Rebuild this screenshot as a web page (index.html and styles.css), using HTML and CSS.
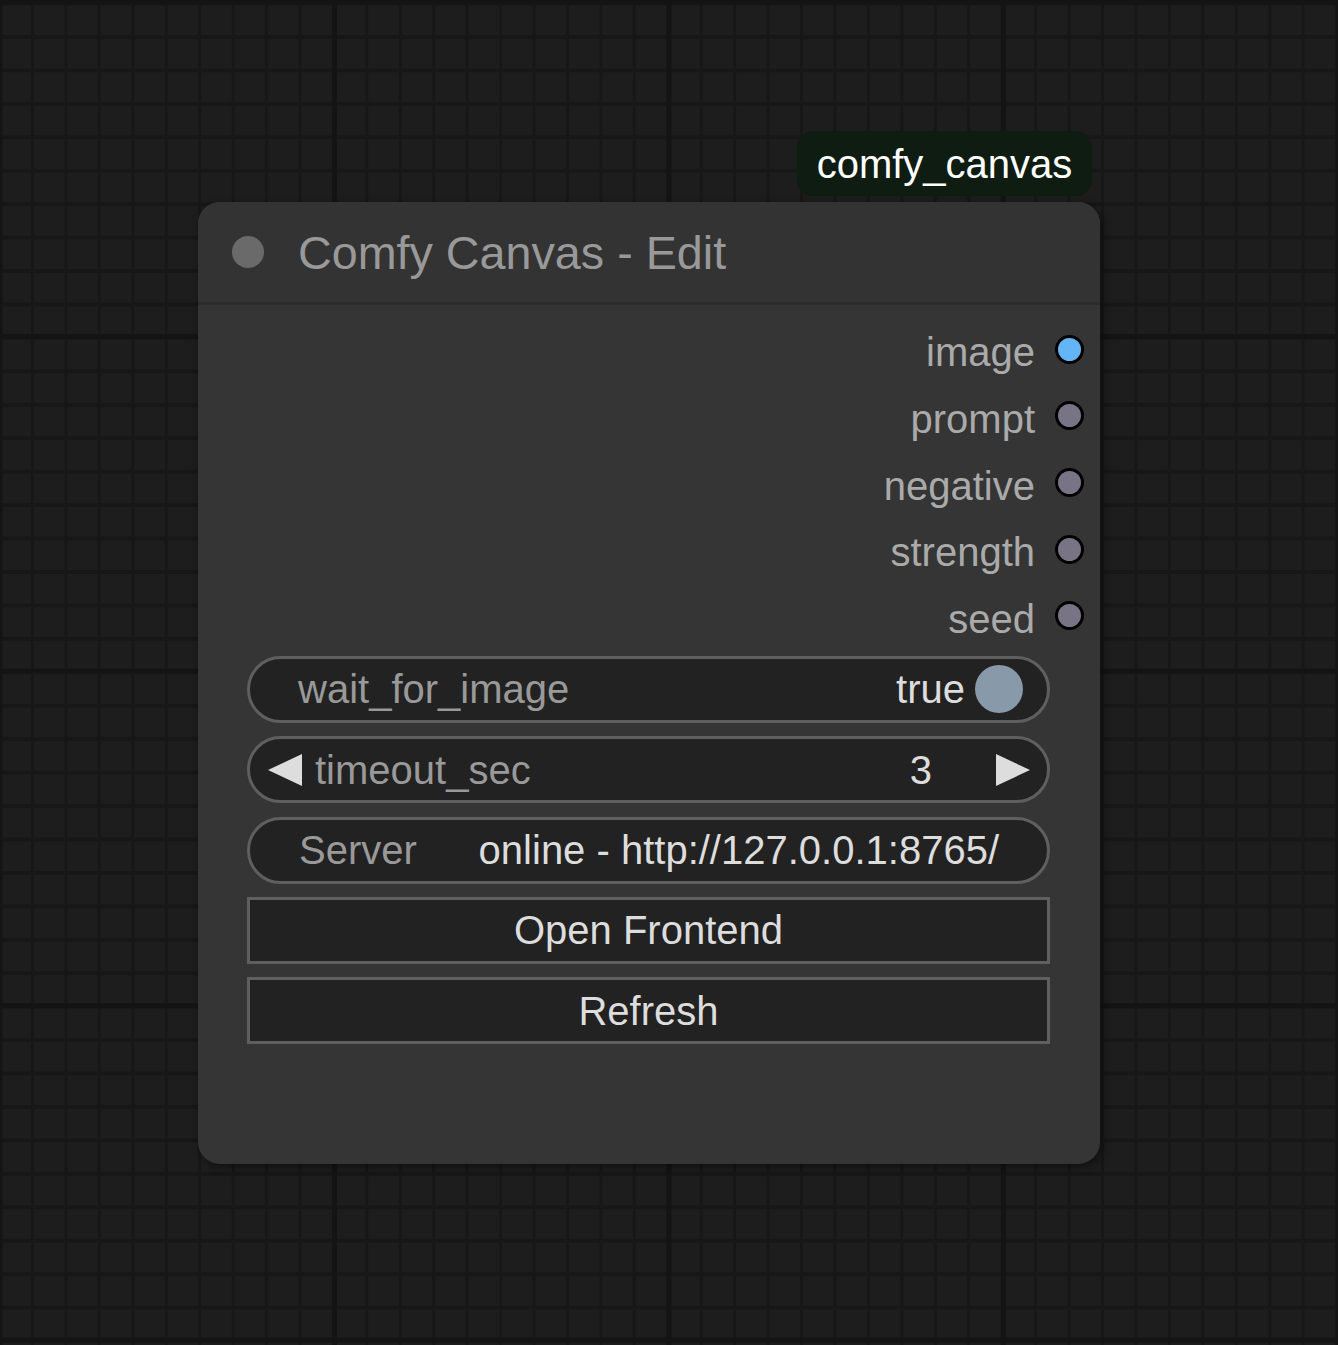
FILE: index.html
```html
<!DOCTYPE html>
<html>
<head>
<meta charset="utf-8">
<link rel="stylesheet" href="styles.css">
</head>
<body>
<div class="canvas">
  <div class="badge">comfy_canvas</div>
  <div class="node">
    <div class="title">
      <span class="title-dot"></span>
      <span class="title-text">Comfy Canvas - Edit</span>
    </div>
    <div class="node-body">
      <div class="outputs">
        <div class="slot"><span class="slot-label">image</span><span class="slot-dot slot-image"></span></div>
        <div class="slot"><span class="slot-label">prompt</span><span class="slot-dot"></span></div>
        <div class="slot"><span class="slot-label">negative</span><span class="slot-dot"></span></div>
        <div class="slot"><span class="slot-label">strength</span><span class="slot-dot"></span></div>
        <div class="slot"><span class="slot-label">seed</span><span class="slot-dot"></span></div>
      </div>
      <div class="widgets">
        <div class="widget pill toggle">
          <span class="w-label">wait_for_image</span>
          <span class="w-value">true</span>
          <span class="toggle-knob"></span>
        </div>
        <div class="widget pill number">
          <svg class="arrow" width="34" height="32" viewBox="0 0 34 32"><polygon points="0,16 34,0 34,32" fill="#dddddd"/></svg>
          <span class="w-label">timeout_sec</span>
          <span class="w-value">3</span>
          <svg class="arrow arrow-right" width="34" height="32" viewBox="0 0 34 32"><polygon points="0,0 34,16 0,32" fill="#dddddd"/></svg>
        </div>
        <div class="widget pill text">
          <span class="w-label">Server</span>
          <span class="w-value">online - http://127.0.0.1:8765/</span>
        </div>
        <div class="widget button">Open Frontend</div>
        <div class="widget button">Refresh</div>
      </div>
    </div>
  </div>
</div>
</body>
</html>
```

FILE: styles.css
```css
html, body {
  margin: 0;
  padding: 0;
}

body {
  width: 1338px;
  height: 1345px;
  overflow: hidden;
  font-family: "Liberation Sans", Arial, sans-serif;
  background-color: #1d1d1d;
  background-image:
    linear-gradient(90deg, #141414 5px, transparent 5px),
    linear-gradient(180deg, #141414 5px, transparent 5px),
    linear-gradient(90deg, #171717 3px, transparent 3px),
    linear-gradient(180deg, #171717 4px, transparent 4px);
  background-size:
    334.5px 334.5px,
    334.5px 334.5px,
    33.45px 33.45px,
    33.45px 33.45px;
  background-position:
    -2.5px 0,
    0 -0.5px,
    31px 0,
    0 35px;
}

.canvas {
  position: relative;
  width: 1338px;
  height: 1345px;
}

.badge {
  position: absolute;
  left: 797px;
  top: 131px;
  width: 295px;
  height: 65px;
  border-radius: 16px;
  background: #0f1c11;
  color: #ffffff;
  font-size: 40px;
  display: flex;
  align-items: center;
  justify-content: center;
  line-height: 1;
}

.node {
  position: absolute;
  left: 198px;
  top: 202px;
  width: 902px;
  height: 962px;
  border-radius: 22px;
  background: #353535;
  box-shadow: 3px 3px 10px rgba(0, 0, 0, 0.45);
  display: flex;
  flex-direction: column;
}

.title {
  height: 100px;
  border-bottom: 3px solid #2c2c2c;
  background: #333333;
  border-radius: 22px 22px 0 0;
  display: flex;
  align-items: center;
  padding-left: 34px;
}

.title-dot {
  width: 32px;
  height: 32px;
  border-radius: 50%;
  background: #6a6a6a;
  flex: none;
}

.title-text {
  margin-left: 34px;
  color: #999999;
  font-size: 46.7px;
  line-height: 1;
  position: relative;
  top: 1px;
}

.node-body {
  flex: 1;
  display: flex;
  flex-direction: column;
  padding-top: 11px;
}

.outputs {
  display: flex;
  flex-direction: column;
}

.slot {
  height: 66.67px;
  display: flex;
  align-items: center;
  justify-content: flex-end;
  padding-right: 16px;
}

.slot-label {
  color: #aaaaaa;
  font-size: 40px;
  line-height: 1;
  margin-right: 20px;
  position: relative;
  top: 3px;
}

.slot-dot {
  width: 29px;
  height: 29px;
  box-sizing: border-box;
  border-radius: 50%;
  border: 3px solid #000000;
  background: #787486;
  flex: none;
}

.slot-image {
  background: #64b5f6;
}

.widgets {
  margin-top: 6.7px;
  padding: 0 50px 0 49px;
  display: flex;
  flex-direction: column;
  gap: 13.3px;
}

.widget {
  height: 67px;
  box-sizing: border-box;
  background: #222222;
  border: 3px solid #5f5f5f;
  display: flex;
  align-items: center;
  font-size: 40px;
  line-height: 1;
}

.pill {
  border-radius: 34px;
}

.w-label {
  color: #999999;
}

.w-value {
  color: #dddddd;
}

.toggle {
  padding: 0 24px 0 48px;
}

.toggle .w-label {
  flex: 1;
}

.toggle-knob {
  width: 48px;
  height: 48px;
  border-radius: 50%;
  background: #8899aa;
  margin-left: 10px;
  flex: none;
}

.number {
  padding: 0 17px 0 18px;
}

.number .arrow {
  flex: none;
  display: block;
}

.number .w-label {
  margin-left: 13px;
  flex: 1;
}

.number .arrow-right {
  margin-left: 64px;
}

.text {
  padding: 0 48px 0 49px;
}

.text .w-label {
  flex: 1;
}

.button {
  justify-content: center;
  color: #dddddd;
  border-radius: 0;
}
```
